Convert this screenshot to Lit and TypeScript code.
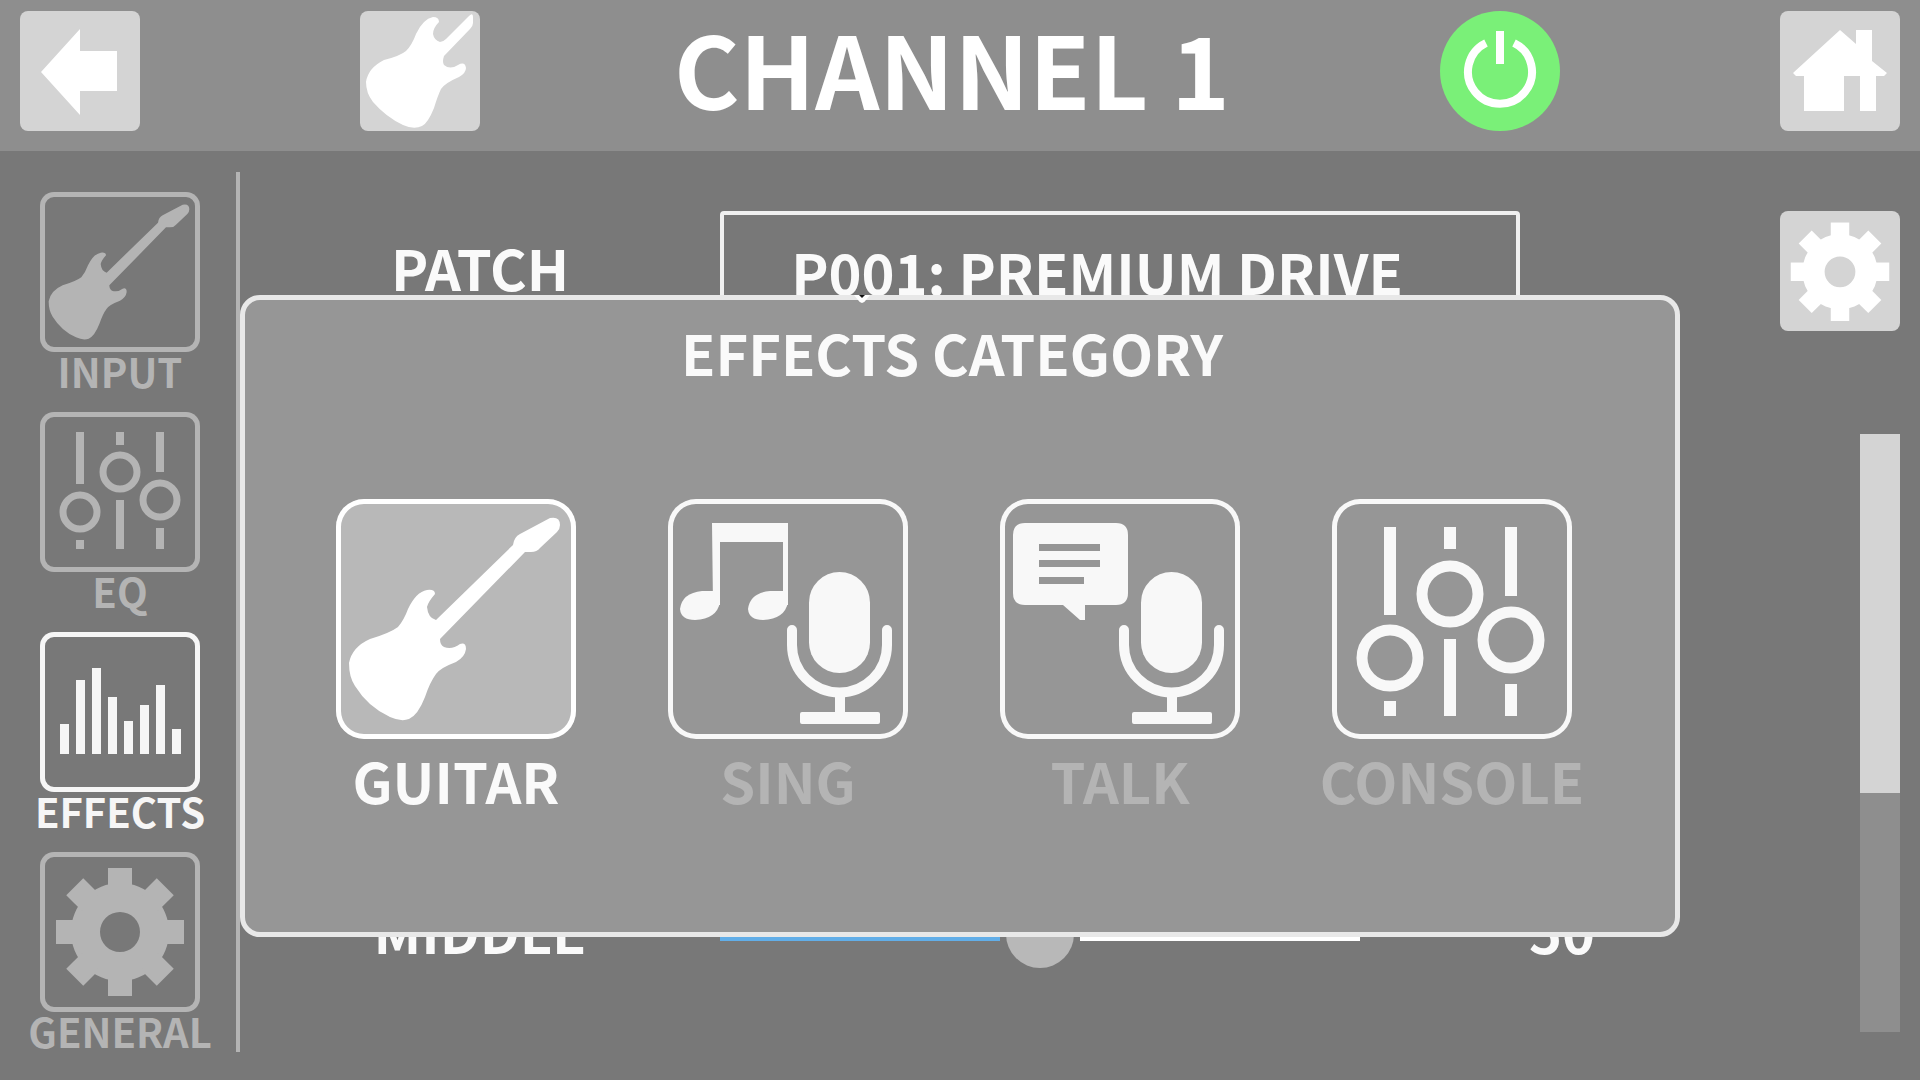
import { LitElement, html, css, svg } from "lit";
import { customElement, property, state } from "lit/decorators.js";
import { classMap } from "lit/directives/class-map.js";

const guitar = svg`<path d="M214 19 Q224 17 224 26 Q224 30 221 33 L204 49 Q201 53 195 53 L189 53 L104 140 Q104 146 108 148 Q116 151 124 145 Q130 143 130 150 Q129 158 120 163 Q104 169 100 175 Q94 183 89 198 Q82 216 73 220 Q65 223 54 218 Q32 208 19 187 Q13 178 13 164 Q16 148 34 140 Q54 134 62 128 Q68 121 72 110 Q80 93 91 91 Q99 90 99 95 Q92 103 91 108 Q92 119 100 121 L177 46 Q178 38 184 35 Z" />`;

const guitarBody = svg`<path d="M109 5 Q113 1 113 6 V12 Q113 15 110 18 L84 45 Q82 51 84 54 Q90 59 98 54 Q105 50 106 57 Q106 62 99 66 Q85 72 81 78 Q78 84 74 97 Q68 112 62 115 Q54 119 43 114 Q26 106 13 91 Q6 82 6 71 Q8 57 24 49 Q40 45 46 40 Q52 34 56 23 Q63 8 73 6 Q79 6 79 11 Q73 17 73 23 Q74 29 80 31 Q83 31 86 28 Z" />`;

const mic = svg`
  <rect x="141" y="73" width="61" height="101" rx="30.5" />
  <path d="M124 131 V146 a47.5 47.5 0 0 0 95 0 V131" fill="none" stroke="currentColor" stroke-width="10" stroke-linecap="round" />
  <path d="M167 192 h10 v21 h33 q2 0 2 2 v8 q0 2 -2 2 h-76 q-2 0 -2 -2 v-8 q0 -2 2 -2 h33 z" />`;

const gear = svg`
  <path fill-rule="evenodd" d="M80 31 a49 49 0 1 0 0 98 a49 49 0 1 0 0 -98 M80 60 a20 20 0 1 1 0 40 a20 20 0 1 1 0 -40" />
  ${[0, 45, 90, 135, 180, 225, 270, 315].map(
    (a) => svg`<rect x="68" y="16" width="24" height="22" transform="rotate(${a} 80 80)" />`,
  )}`;

const bars = [
  [20, 92],
  [36, 48],
  [52, 36],
  [68, 65],
  [84, 89],
  [100, 73],
  [116, 53],
  [132, 97],
];

const icons: Record<string, { box: string; art: unknown }> = {
  back: { box: "0 0 120 120", art: svg`<path d="M21 61 L60 18 V40 H97 V80 H60 V104 Z" />` },
  home: {
    box: "0 0 120 120",
    art: svg`<path d="M60 19 L76 33 V19 H92 V50 L107 62 L104 65 H96 V100 H80 V65 H64 V100 H24 V65 H16 L13 62 Z" />`,
  },
  power: {
    box: "0 0 120 120",
    art: svg`<path d="M46 32 A32 32 0 1 0 74 32" fill="none" stroke="currentColor" stroke-width="8" /><rect x="56" y="20" width="8" height="33" />`,
  },
  body: { box: "0 0 120 120", art: guitarBody },
  cog: { box: "2 1 156 156", art: gear },
  gear: { box: "0 0 160 160", art: gear },
  guitar: { box: "0 0 240 240", art: guitar },
  eq: {
    box: "0 0 160 160",
    art: svg`<path fill="none" stroke="currentColor" stroke-width="8" d="M40 20 V72 M40 128 V137 M80 20 V33 M80 88 V137 M120 20 V60 M120 116 V137" />
      <g fill="none" stroke="currentColor" stroke-width="7"><circle cx="40" cy="100" r="17" /><circle cx="80" cy="60" r="17" /><circle cx="120" cy="88" r="17" /></g>`,
  },
  bars: {
    box: "0 0 160 160",
    art: bars.map(([x, y]) => svg`<rect x=${x} y=${y} width="9" height=${122 - y} />`),
  },
  sing: {
    box: "0 0 240 240",
    art: svg`<path d="M44 24 H120 V106 H115 V43 H52 V106 H45 Z" />
      <path d="M12 110 Q14 94 34 92 H52 V103 Q49 120 27 121 Q13 121 12 110 Z" />
      <path d="M80 110 Q82 94 102 92 H120 V103 Q117 120 95 121 Q81 121 80 110 Z" />${mic}`,
  },
  talk: {
    box: "0 0 240 240",
    art: svg`<path fill-rule="evenodd" d="M25 24 H116 Q128 24 128 36 V94 Q128 106 116 106 H85 V121 H80 L63 106 H25 Q13 106 13 94 V36 Q13 24 25 24 Z M39 45 V52 H100 V45 Z M39 61 V68 H100 V61 Z M39 78 V85 H84 V78 Z" />${mic}`,
  },
  console: {
    box: "0 0 240 240",
    art: svg`<path fill="none" stroke="currentColor" stroke-width="12" d="M58 28 V116 M58 202 V217 M118 28 V50 M118 140 V217 M179 28 V97 M179 185 V217" />
      <g fill="none" stroke="currentColor" stroke-width="11"><circle cx="58" cy="159" r="28" /><circle cx="118" cy="95" r="28" /><circle cx="179" cy="141" r="28" /></g>`,
  },
};

@customElement("device-icon")
class DeviceIcon extends LitElement {
  @property() name = "";
  static styles = css`
    :host { display: block; }
    .icon { display: block; width: 100%; height: 100%; fill: currentColor; }
  `;
  render() {
    const icon = icons[this.name];
    return html`<svg class="icon" viewBox=${icon.box} aria-hidden="true">${icon.art}</svg>`;
  }
}

@customElement("app-root")
class AppRoot extends LitElement {
  @state() private tab = "EFFECTS";
  @state() private category = "GUITAR";
  @state() private middle = 50;

  private tabs = [
    { label: "INPUT", icon: "guitar" },
    { label: "EQ", icon: "eq" },
    { label: "EFFECTS", icon: "bars" },
    { label: "GENERAL", icon: "gear" },
  ];
  private categories = [
    { label: "GUITAR", icon: "guitar" },
    { label: "SING", icon: "sing" },
    { label: "TALK", icon: "talk" },
    { label: "CONSOLE", icon: "console" },
  ];

  static styles = css`
    :host {
      display: flex;
      flex-direction: column;
      min-height: 100vh;
      background: #787878;
      color: #fafafa;
      font-family: "Noto Sans CJK JP", "Noto Sans", sans-serif;
      font-weight: 700;
      font-size: 56px;
      line-height: 60px;
    }
    *, *::before { box-sizing: border-box; }
    button, select {
      margin: 0; padding: 0; border: 0; background: none;
      font: inherit; color: inherit; cursor: pointer;
    }
    .header {
      display: flex;
      align-items: center;
      padding: 11px 20px 20px;
      background: #8e8e8e;
    }
    .group { display: flex; gap: 220px; }
    .square {
      flex: none; width: 120px; height: 120px; border-radius: 8px;
      background: #d4d4d4; color: #fff; overflow: hidden;
    }
    .square.power { border-radius: 50%; background: #7af078; }
    .square device-icon { width: 100%; height: 100%; }
    .title {
      flex: 1; margin: 0; padding: 0 16px 8px 0;
      font-size: 100px; line-height: 108px; text-align: center; white-space: nowrap; color: #fff;
    }
    .body { position: relative; flex: 1; display: flex; }
    .sidebar {
      flex: none; width: 240px; margin: 21px 0 28px; padding: 20px 0 0 4px;
      display: flex; flex-direction: column; gap: 22px; align-items: center;
      border-right: 4px solid #b4b4b4;
    }
    .tab {
      display: flex; flex-direction: column; align-items: center;
      font-size: 40px; line-height: 38px; color: #b4b4b4;
    }
    .tab.on { color: #f6f6f6; }
    .tile { width: 160px; height: 160px; border-radius: 14px; box-shadow: inset 0 0 0 5px currentColor; }
    .panel {
      flex: 1; padding: 60px 0 86px;
      display: flex; flex-direction: column; justify-content: space-between;
    }
    .row {
      display: grid; grid-template-columns: 120fr 160fr 40fr 21fr;
      align-items: center; height: 120px;
    }
    .name, .value { padding-bottom: 8px; text-align: center; }
    .patch {
      grid-column: 2 / 4; height: 120px; padding: 0 46px 0 0;
      appearance: none; border: 4px solid #f0f0f0; border-radius: 4px;
      text-align: center; text-align-last: center;
    }
    .slider {
      appearance: none; width: 100%; height: 68px; margin: 0; background: none;
    }
    .slider::-webkit-slider-runnable-track {
      height: 14px;
      background: linear-gradient(to right, #62aee8 calc(50% - 40px), transparent calc(50% - 40px), transparent calc(50% + 40px), #fff calc(50% + 40px));
    }
    .slider::-webkit-slider-thumb {
      appearance: none; width: 68px; height: 68px; margin-top: -27px;
      border: 0; border-radius: 50%; background: #b8b8b8;
    }
    .value { grid-column: 4; }
    .rail {
      flex: none; width: 316px; padding: 60px 20px 48px 0;
      display: flex; flex-direction: column; align-items: flex-end; gap: 103px;
    }
    .scroll { flex: 1; width: 40px; background: #8e8e8e; }
    .thumb { height: 60%; background: #d4d4d4; }
    .dialog {
      position: absolute; left: 240px; right: 240px; top: 144px; height: 642px;
      margin: 0; padding: 22px 103px 0 91px;
      border: 5px solid #e8e8e8; border-radius: 20px; background: #969696;
    }
    .heading { margin: 0 0 117px; padding-right: 4px; font: inherit; text-align: center; }
    .choices { display: flex; justify-content: space-between; }
    .choice { width: 240px; display: flex; flex-direction: column; align-items: center; gap: 11px; color: #b4b4b4; }
    .choice.on { color: #fafafa; }
    .choice .tile { width: 240px; height: 240px; border-radius: 28px; color: #f8f8f8; }
    .choice.on .tile { background: #b8b8b8; color: #fff; }
    .pointer { position: absolute; left: 850px; top: 143px; width: 24px; height: 12px; }
  `;

  render() {
    return html`
      <header class="header">
        <div class="group">
          <button class="square" aria-label="Back"><device-icon name="back"></device-icon></button>
          <button class="square" aria-label="Instrument"><device-icon name="body"></device-icon></button>
        </div>
        <h1 class="title">CHANNEL 1</h1>
        <div class="group">
          <button class="square power" aria-label="Power"><device-icon name="power"></device-icon></button>
          <button class="square" aria-label="Home"><device-icon name="home"></device-icon></button>
        </div>
      </header>
      <div class="body">
        <nav class="sidebar">
          ${this.tabs.map(
            (t) => html`<button
              class=${classMap({ tab: true, on: t.label === this.tab })}
              @click=${() => (this.tab = t.label)}
            >
              <device-icon class="tile" name=${t.icon}></device-icon>
              <span>${t.label}</span>
            </button>`,
          )}
        </nav>
        <main class="panel">
          <div class="row">
            <label class="name" for="patch">PATCH</label>
            <select class="patch" id="patch">
              <option>P001: PREMIUM DRIVE</option>
            </select>
          </div>
          <div class="row">
            <label class="name" for="middle">MIDDLE</label>
            <input
              class="slider" id="middle" type="range" min="0" max="100"
              .value=${String(this.middle)}
              @input=${(e: Event) => (this.middle = Number((e.target as HTMLInputElement).value))}
            />
            <output class="value" for="middle">${this.middle}</output>
          </div>
        </main>
        <aside class="rail">
          <button class="square" aria-label="Settings"><device-icon name="cog"></device-icon></button>
          <div class="scroll"><div class="thumb"></div></div>
        </aside>
        <section class="dialog" role="dialog" aria-labelledby="heading">
          <h2 class="heading" id="heading">EFFECTS CATEGORY</h2>
          <div class="choices">
            ${this.categories.map(
              (c) => html`<button
                class=${classMap({ choice: true, on: c.label === this.category })}
                @click=${() => (this.category = c.label)}
              >
                <device-icon class="tile" name=${c.icon}></device-icon>
                <span>${c.label}</span>
              </button>`,
            )}
          </div>
        </section>
        <svg class="pointer" viewBox="0 0 24 12" aria-hidden="true">
          <path d="M4 1 H20 L16 6 Q12 12 8 6 Z" fill="#fff" />
          <path d="M9 1 H15 L12 4 Z" fill="#111" />
        </svg>
      </div>
    `;
  }
}
